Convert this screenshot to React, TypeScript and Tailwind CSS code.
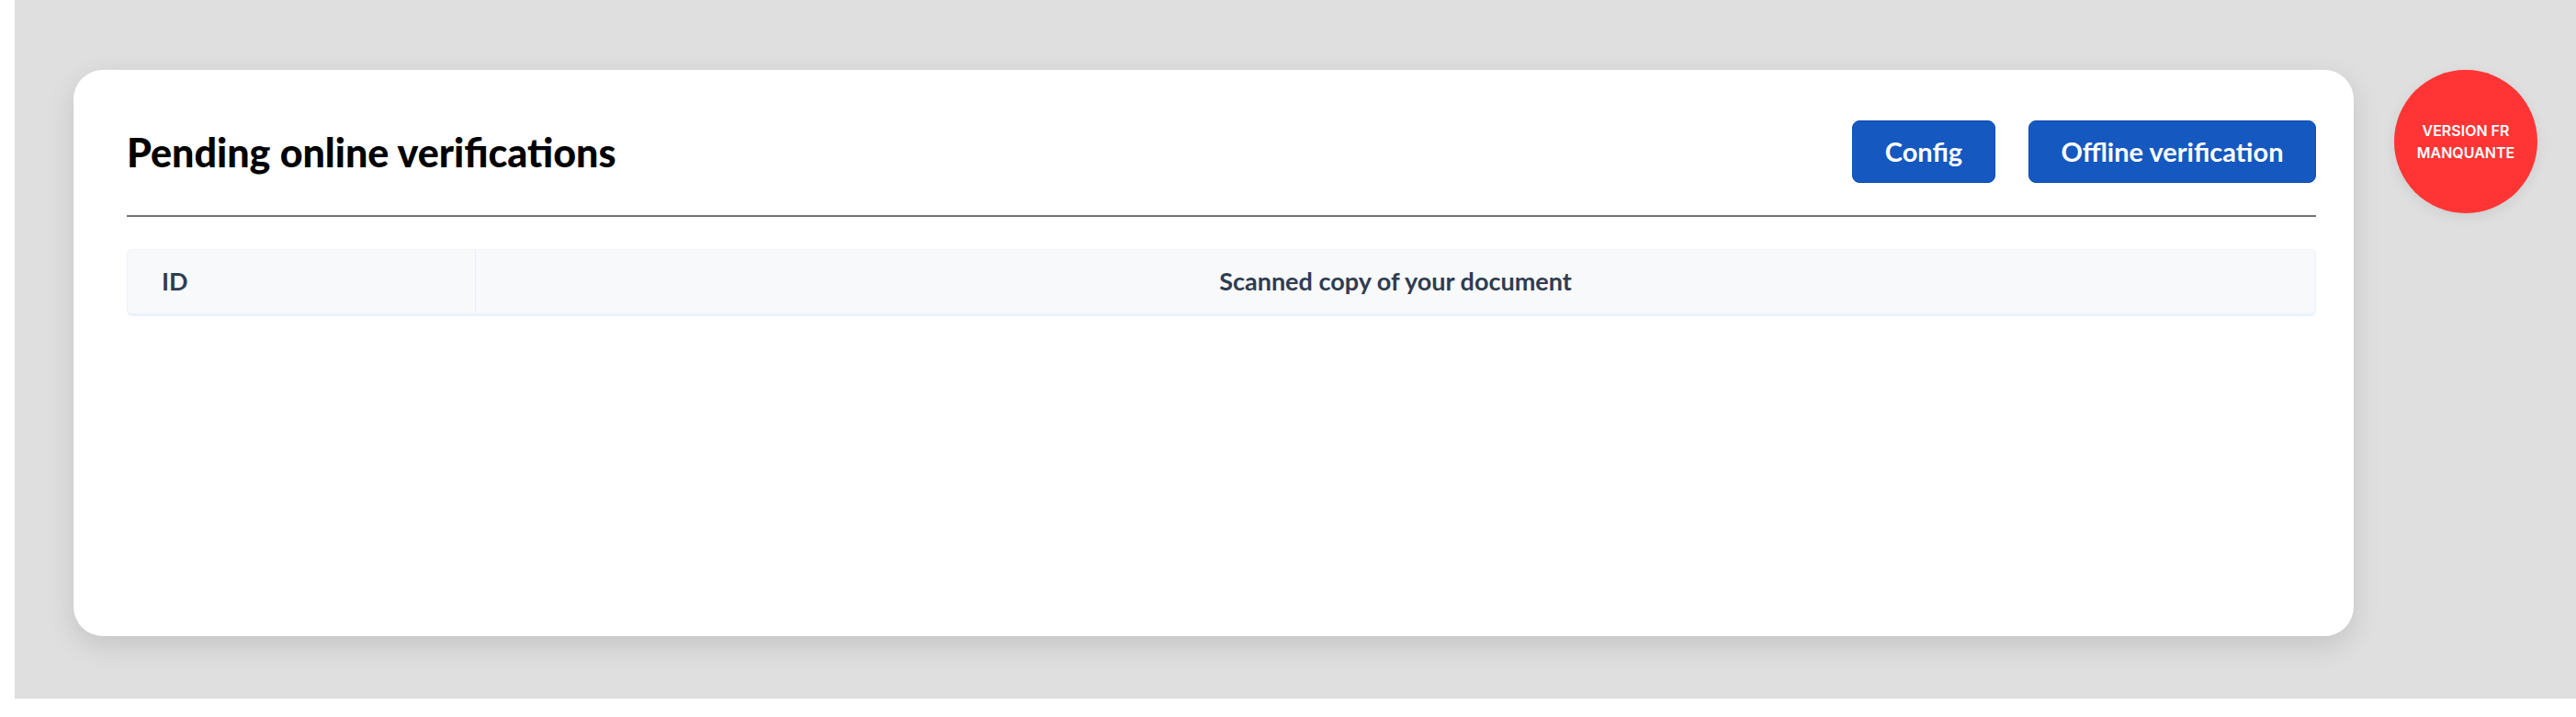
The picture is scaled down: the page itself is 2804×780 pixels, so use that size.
// Pending online verifications — admin card with an empty table header
// and a floating "missing FR version" badge beside it.

const columns = [
  { key: 'id', label: 'ID', className: 'w-[379px] shrink-0 justify-start pl-[37px] border-r border-[#e8eef8]' },
  { key: 'scan', label: 'Scanned copy of your document', className: 'flex-1 justify-center' },
]

function ActionButton({ label, width }: { label: string; width: string }) {
  return (
    <button
      type="button"
      className={`${width} h-[68px] flex items-center justify-center rounded-lg border border-[#0d4db3] bg-[#1558c0] text-[29px] font-bold text-white`}
    >
      {label}
    </button>
  )
}

export default function App() {
  return (
    <div className="min-h-[780px] bg-white font-['Lato',sans-serif]">
      <div className="ml-4 h-[760px] bg-[#dfdfdf] flex items-start gap-[44px] pl-16 pt-[76px]">
        <section className="w-[2482px] h-[616px] shrink-0 rounded-[32px] bg-white pl-[58px] pr-[41px] pt-[55px] shadow-[0_10px_30px_rgba(0,0,0,0.12)]">
          <div className="flex h-[68px] items-center justify-between">
            <h1 className="text-[43px] font-black leading-none text-black">Pending online verifications</h1>
            <div className="flex gap-[36px]">
              <ActionButton label="Config" width="w-[156px]" />
              <ActionButton label="Offline verification" width="w-[313px]" />
            </div>
          </div>

          <hr className="mt-[35px] border-0 border-t-2 border-[#707479]" />

          <div className="mt-[35px] flex h-[73px] rounded-md border border-[#edf2fb] border-b-[3px] border-b-[#ebf2fd] bg-[#f8f9fb]">
            {columns.map(col => (
              <div key={col.key} className={`flex items-center text-[27px] font-bold text-[#2f3d50] ${col.className}`}>
                {col.label}
              </div>
            ))}
          </div>
        </section>

        <div className="flex h-[156px] w-[156px] shrink-0 flex-col items-center justify-center rounded-full bg-[#ff3535] font-['Inter',sans-serif] text-[16px] font-semibold leading-[24px] text-white shadow-[0_4px_14px_rgba(0,0,0,0.08)]">
          <span>VERSION FR</span>
          <span>MANQUANTE</span>
        </div>
      </div>
    </div>
  )
}
